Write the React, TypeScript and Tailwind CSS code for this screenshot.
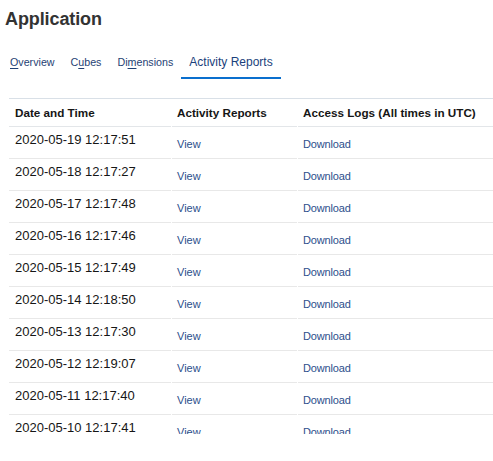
import React from "react";

const rows = [
  "2020-05-19 12:17:51",
  "2020-05-18 12:17:27",
  "2020-05-17 12:17:48",
  "2020-05-16 12:17:46",
  "2020-05-15 12:17:49",
  "2020-05-14 12:18:50",
  "2020-05-13 12:17:30",
  "2020-05-12 12:19:07",
  "2020-05-11 12:17:40",
  "2020-05-10 12:17:41",
];

function Tab({ label, keyIndex, active }: { label: string; keyIndex?: number; active?: boolean }) {
  if (active) {
    return (
      <div className="px-2 pb-[8px] pt-[3px] text-[12px] leading-[14px] text-[#1b3f7c] border-b-2 border-[#0a6fce]">
        {label}
      </div>
    );
  }
  const i = keyIndex ?? 0;
  return (
    <div className="px-2 pb-[8px] pt-[3px] text-[10.7px] leading-[14px] text-[#1f3f74] border-b-2 border-transparent">
      {label.slice(0, i)}
      <span className="underline underline-offset-2">{label[i]}</span>
      {label.slice(i + 1)}
    </div>
  );
}

export default function App() {
  return (
    <div className="h-[461px] w-[493px] overflow-hidden bg-white font-['Liberation_Sans',Arial,sans-serif]">
      <h1 className="pl-[5px] pt-[9px] text-[18px] leading-[21px] font-bold text-[#333333] tracking-[-0.1px]">
        Application
      </h1>

      {/* Tabs */}
      <div className="mt-[22px] ml-[2px] flex">
        <Tab label="Overview" keyIndex={0} />
        <Tab label="Cubes" keyIndex={1} />
        <Tab label="Dimensions" keyIndex={2} />
        <Tab label="Activity Reports" active />
      </div>

      {/* Table */}
      <div className="mt-[19px] ml-[9px] h-[336px] overflow-hidden border-t border-[#d9e0e7]">
        <div className="grid grid-cols-[162px_125px_1fr] gap-x-px text-[11.7px] font-bold text-[#161616]">
          <div className="h-[28px] flex items-center pl-[6px] border-b border-[#e3e6e9]">Date and Time</div>
          <div className="h-[28px] flex items-center pl-[5px] border-b border-[#e3e6e9]">Activity Reports</div>
          <div className="h-[28px] flex items-center pl-[5px] border-b border-[#e3e6e9]">Access Logs (All times in UTC)</div>
        </div>
        {rows.map((d) => (
          <div key={d} className="grid grid-cols-[162px_125px_1fr] gap-x-px">
            <div className="h-[32px] pl-[6px] pt-[5px] text-[13px] leading-[16px] text-[#161616] border-b border-[#e8e8e8]">
              {d}
            </div>
            <div className="h-[32px] pl-[5px] pt-[10px] text-[11px] leading-[14px] text-[#2c4f8c] border-b border-[#e8e8e8]">
              <a href="#">View</a>
            </div>
            <div className="h-[32px] pl-[5px] pt-[10px] text-[11px] leading-[14px] tracking-[-0.15px] text-[#2c4f8c] border-b border-[#e8e8e8]">
              <a href="#">Download</a>
            </div>
          </div>
        ))}
      </div>
    </div>
  );
}
